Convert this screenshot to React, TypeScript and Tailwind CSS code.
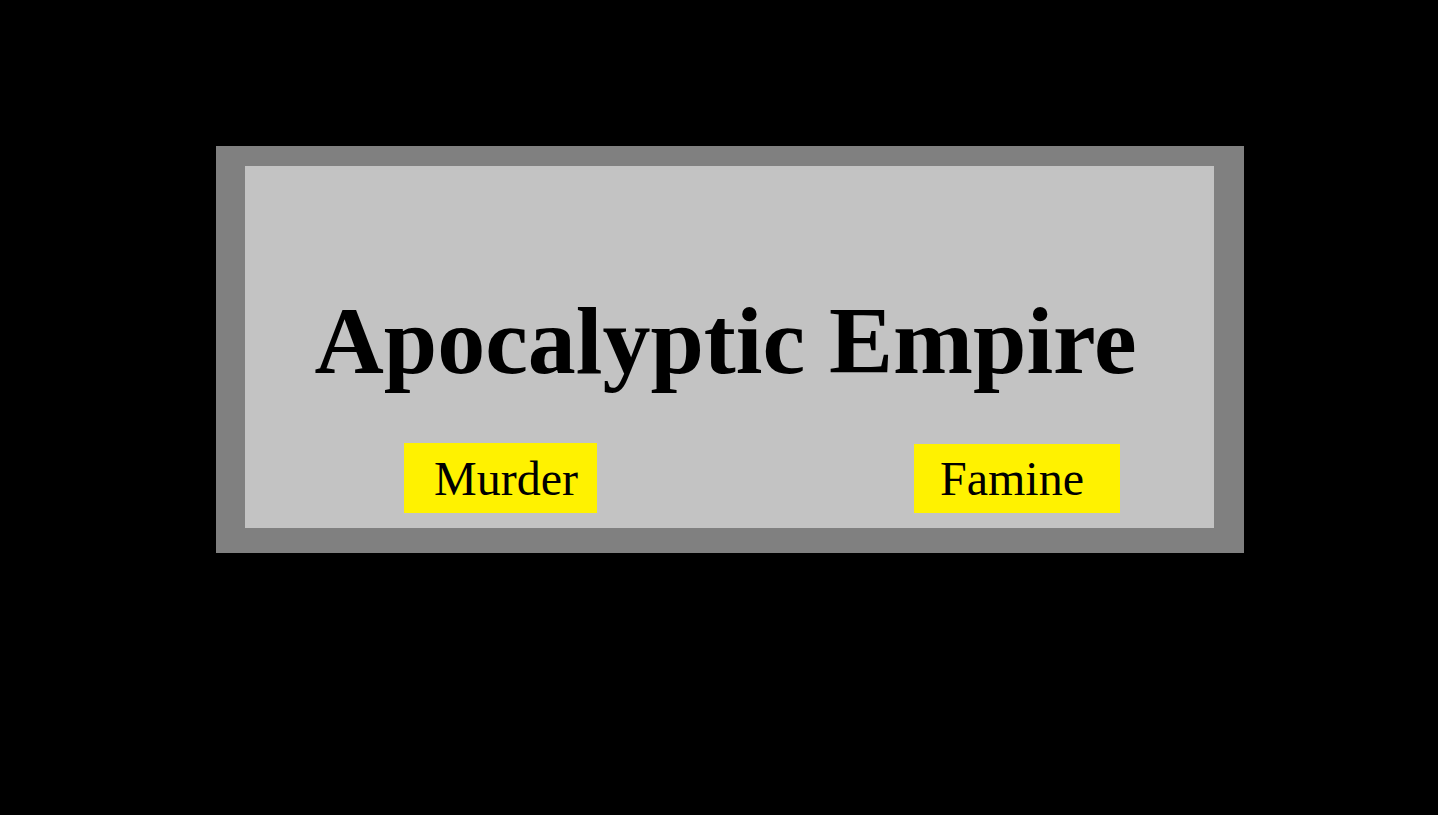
export default function App() {
  return (
    <div className="w-full h-[815px] bg-black overflow-hidden pt-[146px] pl-[216px]">
      <div className="w-[1028px] bg-[#c3c3c3] border-[#808080] border-t-[20px] border-b-[25px] border-l-[29px] border-r-[30px] border-solid">
        <div className="h-[362px] flex flex-col font-['Liberation_Serif','Times_New_Roman',serif] text-black">
          <h1 className="pt-[127px] text-[96px] leading-none font-bold text-center pr-[8px]">
            Apocalyptic Empire
          </h1>
          <div className="flex items-start mt-[54px] pl-[159px]">
            <button className="w-[193px] h-[70px] bg-[#fff200] flex items-center pl-[30px] pt-[2px] text-[48px] leading-none">
              Murder
            </button>
            <button className="ml-[317px] mt-[1px] w-[206px] h-[69px] bg-[#fff200] flex items-center pl-[26px] text-[48px] leading-none">
              Famine
            </button>
          </div>
        </div>
      </div>
    </div>
  )
}
